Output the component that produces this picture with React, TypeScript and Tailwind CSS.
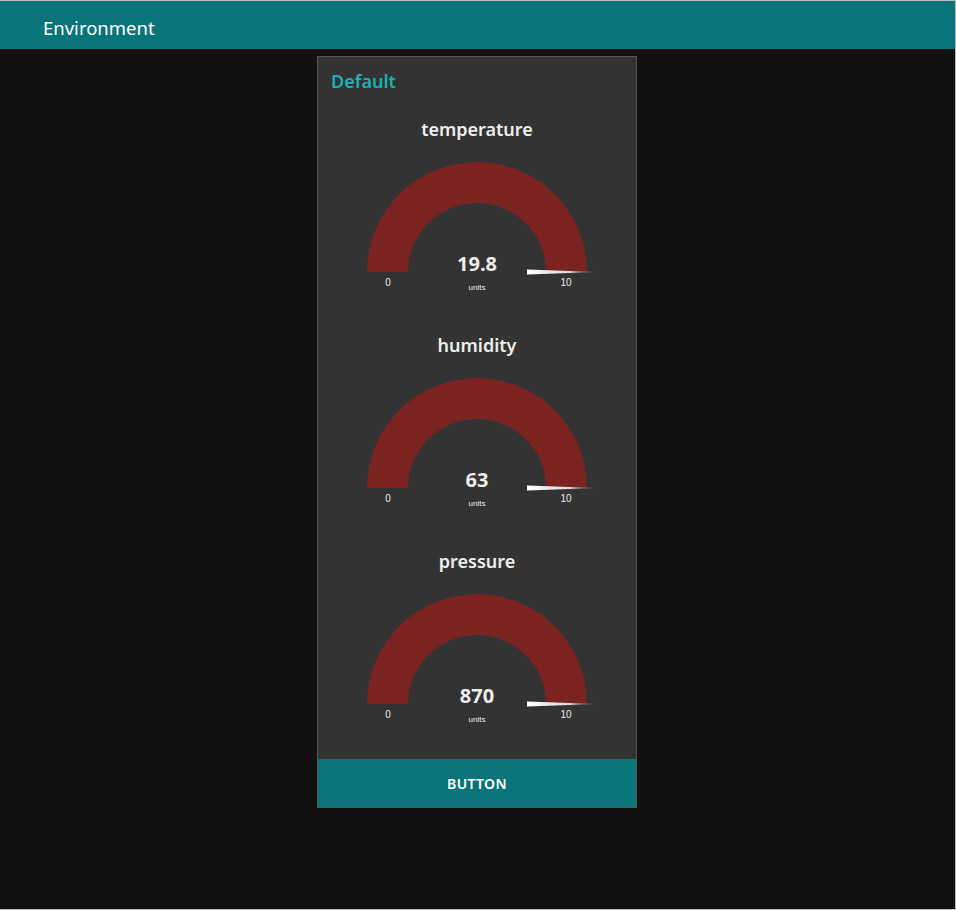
import React from 'react';

const gauges = [
  { title: 'temperature', value: '19.8' },
  { title: 'humidity', value: '63' },
  { title: 'pressure', value: '870' },
];

function Gauge({ title, value }: { title: string; value: string }) {
  return (
    <div className="flex flex-col items-center h-[216px]">
      <div className="h-[48px] flex items-center justify-center text-[18px] font-semibold text-[#eeeeee]">{title}</div>
      <svg className="block" width="318" height="168" viewBox="0 0 318 168">
        <defs>
          <linearGradient id={'ndl-' + title} x1="0" x2="1" y1="0" y2="0">
            <stop offset="0" stopColor="#ffffff" />
            <stop offset="0.6" stopColor="#dddddd" />
            <stop offset="1" stopColor="#777777" stopOpacity="0.4" />
          </linearGradient>
        </defs>
        <path d="M 49 119 A 110 110 0 0 1 269 119 L 228 119 A 69 69 0 0 0 90 119 Z" fill="#7b2321" />
        <polygon points="209,116.5 209,121.5 279,119" fill={'url(#ndl-' + title + ')'} />
        <text x="70" y="133" textAnchor="middle" fontSize="10" fill="#eeeeee" fontFamily="'Liberation Sans', Arial, sans-serif">0</text>
        <text x="248" y="133" textAnchor="middle" fontSize="10" fill="#eeeeee" fontFamily="'Liberation Sans', Arial, sans-serif">10</text>
        <text x="159" y="118" textAnchor="middle" fontSize="20" fontWeight="bold" fill="#eeeeee" fontFamily="'Noto Sans', sans-serif">{value}</text>
        <text x="159" y="137" textAnchor="middle" fontSize="8" fill="#eeeeee" fontFamily="'Liberation Sans', Arial, sans-serif">units</text>
      </svg>
    </div>
  );
}

export default function App() {
  return (
    <div className="w-[956px] h-[910px] bg-[#111111] border-t border-r border-b border-[#bbbbbb] overflow-hidden" style={{ fontFamily: "'Noto Sans', 'Open Sans', sans-serif" }}>
      {/* header */}
      <div className="h-[48px] bg-[#097479] flex items-center pl-[43px] pt-[6px] text-white text-[18.5px]">Environment</div>
      {/* card */}
      <div className="pt-[7px] pl-[317px]">
        <div className="w-[320px] bg-[#333333] border border-[#555555] flex flex-col">
          <div className="h-[48px] flex items-center px-[13px] text-[18px] font-semibold text-[#1fb0b8]">Default</div>
          {gauges.map((g) => (
            <Gauge key={g.title} title={g.title} value={g.value} />
          ))}
          <div className="h-[6px]" />
          <button className="h-[48px] bg-[#097479] text-white text-[14px] font-semibold tracking-wide">BUTTON</button>
        </div>
      </div>
    </div>
  );
}
